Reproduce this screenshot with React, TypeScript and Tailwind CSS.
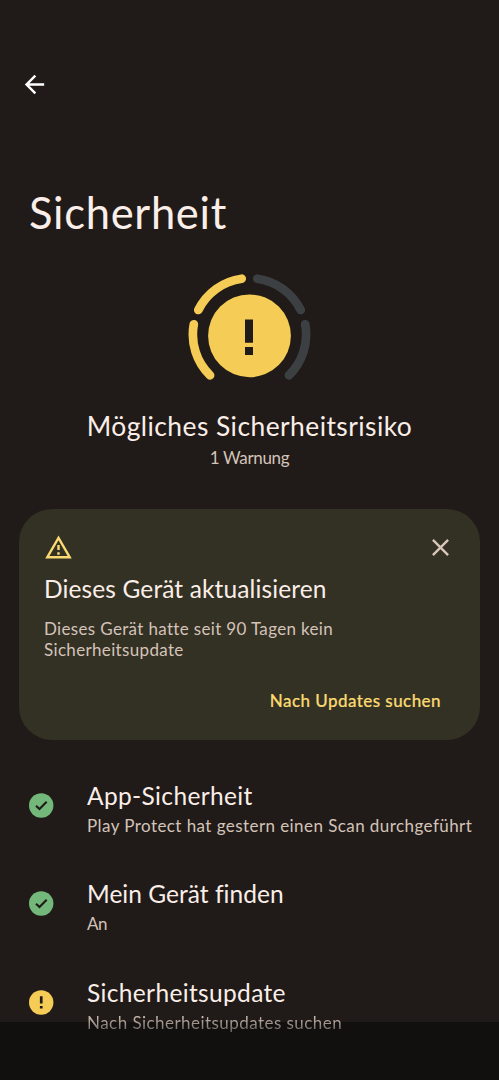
import React from 'react';

type Status = 'ok' | 'warning';

interface SecurityEntry {
  title: string;
  summary: string;
  status: Status;
  titleClass: string;
  summaryClass: string;
}

const entries: SecurityEntry[] = [
  {
    title: 'App-Sicherheit',
    summary: 'Play Protect hat gestern einen Scan durchgeführt',
    status: 'ok',
    titleClass: 'tracking-[0.36px]',
    summaryClass: 'tracking-[0.43px] text-[#d4c3b9]',
  },
  {
    title: 'Mein Gerät finden',
    summary: 'An',
    status: 'ok',
    titleClass: 'tracking-[0.03px]',
    summaryClass: 'tracking-[-0.5px] text-[#d4c3b9]',
  },
  {
    title: 'Sicherheitsupdate',
    summary: 'Nach Sicherheitsupdates suchen',
    status: 'warning',
    titleClass: 'tracking-[0.35px]',
    summaryClass:
      'tracking-[0.45px] bg-linear-to-b from-[#d4c3b9] from-20% to-[#6a625d] to-85% bg-clip-text text-transparent',
  },
];

const BackIcon = () => (
  <svg viewBox="0 0 24 24" className="size-[29px]" fill="#fff">
    <path d="M20 11H7.83l5.59-5.59L12 4l-8 8 8 8 1.41-1.41L7.83 13H20v-2z" />
  </svg>
);

const WarningIcon = () => (
  <svg viewBox="0 0 24 24" className="size-[29px]" fill="#fada71">
    <path d="M12 5.99 19.53 19H4.47L12 5.99M12 2 1 21h22L12 2zm1 14h-2v2h2v-2zm0-6h-2v4h2v-4z" />
  </svg>
);

const CloseIcon = () => (
  <svg viewBox="0 0 24 24" className="size-[29px]" fill="#d8c5b9">
    <path d="M19 6.41 17.59 5 12 10.59 6.41 5 5 6.41 10.59 12 5 17.59 6.41 19 12 13.41 17.59 19 19 17.59 13.41 12z" />
  </svg>
);

const StatusGauge = () => (
  <svg viewBox="0 0 124 112" className="h-[112px] w-[124px]" fill="none">
    <g strokeWidth="8.7" strokeLinecap="round">
      <path d="M22.1 102.3A56.8 56.8 0 0 1 5.8 51.3" stroke="#f5cc55" />
      <path d="M10.3 37A56.8 56.8 0 0 1 53.7 5.7" stroke="#f5cc55" />
      <path d="M69.3 5.7A56.8 56.8 0 0 1 112.7 37" stroke="#3c4043" />
      <path d="M117.2 51.3A56.8 56.8 0 0 1 100.9 102.3" stroke="#3c4043" />
    </g>
    <circle cx="61.5" cy="62.8" r="41.4" fill="#f5cc55" />
    <path d="M57 46.4h8v23.3h-8zM57 74h8v8h-8z" fill="#201b18" />
  </svg>
);

const StatusIcon = ({ status }: { status: Status }) => (
  <svg viewBox="0 0 25 25" className="size-[25px] shrink-0">
    <circle cx="12.2" cy="12.5" r="12.2" fill={status === 'ok' ? '#73b87a' : '#f5cc55'} />
    {status === 'ok' ? (
      <path d="M7 12.7l3.5 3.4 7.2-7.3" fill="none" stroke="#201b18" strokeWidth="2.1" />
    ) : (
      <path d="M10.9 6.2h2.7v7.4h-2.7zM10.9 15.9h2.7v2.5h-2.7z" fill="#201b18" />
    )}
  </svg>
);

const App: React.FC = () => {
  return (
    <div className="relative flex h-[1080px] w-[499px] flex-col overflow-hidden bg-[#201b18] font-[Lato,sans-serif] text-[#fbeee8]">
      <header className="px-[19.5px] pt-[69.5px]">
        <button aria-label="Nach oben" className="block">
          <BackIcon />
        </button>
      </header>

      <h1 className="mt-[85.5px] px-[29px] text-[43.5px] leading-14 tracking-[0.7px] whitespace-nowrap">
        Sicherheit
      </h1>

      <section className="mt-[33px] flex flex-col items-center">
        <StatusGauge />
        <h2 className="mt-[25px] text-[26.4px] leading-8 tracking-[0.45px] whitespace-nowrap">
          Mögliches Sicherheitsrisiko
        </h2>
        <p className="mt-[5px] text-[17px] leading-[22px] tracking-[-0.35px] text-[#d4c3b9]">1 Warnung</p>
      </section>

      <section className="mx-[19px] mt-10 flex h-[231px] flex-col rounded-[33px] bg-[#333024] px-[25px]">
        <div className="flex items-center justify-between pt-[24px]">
          <WarningIcon />
          <button aria-label="Schließen">
            <CloseIcon />
          </button>
        </div>
        <h3 className="mt-[11px] text-[24.5px] leading-8 tracking-[0.12px] whitespace-nowrap">
          Dieses Gerät aktualisieren
        </h3>
        <p className="mt-[13px] text-[17px] leading-[21px] tracking-[0.34px] text-[#d4c3b9]">
          Dieses Gerät hatte seit 90 Tagen kein
          <br />
          Sicherheitsupdate
        </p>
        <button className="mt-[29px] mr-[14px] self-end text-[17px] leading-6 font-medium tracking-[0.44px] text-[#fada71] [-webkit-text-stroke:0.2px_#fada71]">
          Nach Updates suchen
        </button>
      </section>

      <ul className="relative z-10 mt-10">
        {entries.map((entry) => (
          <li key={entry.title} className="flex h-[98.3px] items-start gap-[33px] pl-[29px]">
            <div className="pt-[13px]">
              <StatusIcon status={entry.status} />
            </div>
            <div className="whitespace-nowrap">
              <h3 className={`text-[24.5px] leading-8 ${entry.titleClass}`}>{entry.title}</h3>
              <p className={`mt-px text-[17px] leading-[26px] ${entry.summaryClass}`}>{entry.summary}</p>
            </div>
          </li>
        ))}
      </ul>

      {/* Navigation bar */}
      <div className="absolute inset-x-0 bottom-0 h-[58px] bg-[#11100e]" />
    </div>
  );
};

export default App;
